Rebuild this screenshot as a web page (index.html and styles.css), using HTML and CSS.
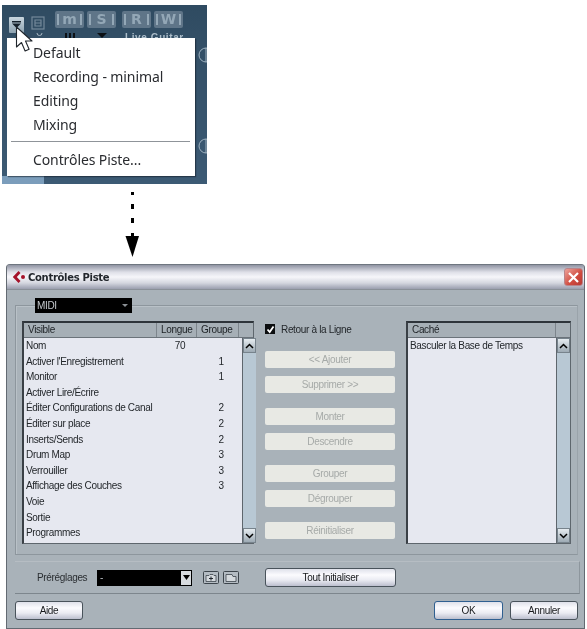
FILE: index.html
```html
<!DOCTYPE html>
<html lang="fr">
<head>
<meta charset="utf-8">
<title>Contrôles Piste</title>
<link rel="stylesheet" href="styles.css">
</head>
<body>
<section class="shot">
  <div class="toolbar">
    <span class="tb-drop"><svg width="15" height="15" viewBox="0 0 15 15"><rect x="3" y="4" width="9" height="1.500" fill="#15202a"/><path d="M3 6.500h9L7.500 11z" fill="#15202a"/></svg></span>
    <span class="tb-page"><svg width="16" height="16" viewBox="0 0 16 16" fill="none" stroke="#74899a" stroke-width="1.200"><rect x="2" y="2" width="12" height="12"/><path d="M5 5h6v6H5zM5 8h6"/></svg></span>
    <span class="tb-key tb-m"><b>m</b></span>
    <span class="tb-key"><b>S</b></span>
    <span class="tb-key tb-r"><b>R</b></span>
    <span class="tb-key tb-w"><b>W</b></span>
  </div>
  <div class="track-row">
    <svg class="tr-dot" width="7" height="5" viewBox="0 0 7 5"><path d="M1 0a2.500 2.500 0 0 0 5 0" fill="none" stroke="#a9b8c4"/></svg>
    <span class="tr-bars"></span>
    <svg class="tr-tri" width="10" height="5" viewBox="0 0 10 5"><path d="M0 0h10L5 5z" fill="#0c1014"/></svg>
    <span class="track-name">Live Guitar</span>
  </div>
  <div class="shot-foot"></div>
  <svg class="knob knob-a" width="10" height="18" viewBox="0 0 10 18" fill="none" stroke="#9fb2c0"><circle cx="9" cy="9" r="7"/><path d="M9 2v14"/></svg>
  <svg class="knob knob-b" width="10" height="18" viewBox="0 0 10 18" fill="none" stroke="#9fb2c0"><circle cx="9" cy="9" r="7"/><path d="M9 2v14"/></svg>
  <nav class="menu">
    <div class="menu-item">Default</div>
    <div class="menu-item">Recording - minimal</div>
    <div class="menu-item">Editing</div>
    <div class="menu-item">Mixing</div>
    <hr class="menu-sep">
    <div class="menu-item">Contrôles Piste...</div>
  </nav>
  <svg class="cursor" width="18" height="28" viewBox="0 0 18 28"><path d="M1.500 1v20l5-4.500 3.600 8.500 4-1.800-3.600-8.200h6.500z" fill="#fff" stroke="#20262c" stroke-width="1.100" stroke-linejoin="round"/></svg>
</section>

<svg class="flow-arrow" width="16" height="80" viewBox="0 0 16 80"><path d="M6 8h3v3H6zM6 20h3v5H6zM6 34h3v5H6zM6 49h3v7H6z" fill="#000"/><path d="M0.500 52h13.500L7.500 73z" fill="#000"/></svg>

<main class="dialog">
  <header class="titlebar">
    <svg class="logo" width="14" height="14" viewBox="0 0 14 14"><path d="M6.500 1 .8 7l5.700 6 2-2L4.800 7l3.700-4z" fill="#a5122a"/><circle cx="11" cy="7" r="2" fill="#a5122a"/></svg>
    <h1 class="title">Contrôles Piste</h1>
    <button class="close" aria-label="Fermer"><svg width="13" height="13" viewBox="0 0 13 13"><path d="M2 2l9 9M11 2l-9 9" stroke="#fff" stroke-width="2.200"/></svg></button>
  </header>
  <div class="dialog-body">
    <fieldset class="group">
      <legend class="midi"><span>MIDI</span><i class="mini-caret"></i></legend>
      <div class="columns">
        <div class="list list-visible">
          <div class="list-head">
            <span class="col-name">Visible</span><span class="col-long">Longue</span><span class="col-grp">Groupe</span><span class="col-sb"></span>
          </div>
          <div class="list-main">
            <div class="rows">
              <div class="row"><span>Nom</span><span class="c">70</span><span></span></div>
              <div class="row"><span>Activer l'Enregistrement</span><span></span><span class="c">1</span></div>
              <div class="row"><span>Monitor</span><span></span><span class="c">1</span></div>
              <div class="row"><span>Activer Lire/Écrire</span><span></span><span></span></div>
              <div class="row"><span>Éditer Configurations de Canal</span><span></span><span class="c">2</span></div>
              <div class="row"><span>Éditer sur place</span><span></span><span class="c">2</span></div>
              <div class="row"><span>Inserts/Sends</span><span></span><span class="c">2</span></div>
              <div class="row"><span>Drum Map</span><span></span><span class="c">3</span></div>
              <div class="row"><span>Verrouiller</span><span></span><span class="c">3</span></div>
              <div class="row"><span>Affichage des Couches</span><span></span><span class="c">3</span></div>
              <div class="row"><span>Voie</span><span></span><span></span></div>
              <div class="row"><span>Sortie</span><span></span><span></span></div>
              <div class="row"><span>Programmes</span><span></span><span></span></div>
            </div>
            <div class="scroll">
              <span class="sb-btn"><svg width="9" height="6" viewBox="0 0 9 6"><path d="M1 5l3.500-3.500L8 5" fill="none" stroke="#000" stroke-width="1.500"/></svg></span>
              <span class="sb-btn"><svg width="9" height="6" viewBox="0 0 9 6"><path d="M1 1l3.500 3.500L8 1" fill="none" stroke="#000" stroke-width="1.500"/></svg></span>
            </div>
          </div>
        </div>

        <div class="actions">
          <label class="wrap"><span class="check"><svg width="9" height="9" viewBox="0 0 9 9"><path d="M1.500 4.500 3.700 7 7.500 1.500" fill="none" stroke="#fff" stroke-width="1.800"/></svg></span>Retour à la Ligne</label>
          <div class="btn-group first">
            <button class="off">&lt;&lt; Ajouter</button>
            <button class="off">Supprimer &gt;&gt;</button>
          </div>
          <div class="btn-group">
            <button class="off">Monter</button>
            <button class="off">Descendre</button>
          </div>
          <div class="btn-group">
            <button class="off">Grouper</button>
            <button class="off">Dégrouper</button>
          </div>
          <div class="btn-group">
            <button class="off">Réinitialiser</button>
          </div>
        </div>

        <div class="list list-hidden">
          <div class="list-head">
            <span class="col-name">Caché</span><span class="col-sb"></span>
          </div>
          <div class="list-main">
            <div class="rows">
              <div class="row single"><span>Basculer la Base de Temps</span></div>
            </div>
            <div class="scroll">
              <span class="sb-btn"><svg width="9" height="6" viewBox="0 0 9 6"><path d="M1 5l3.500-3.500L8 5" fill="none" stroke="#000" stroke-width="1.500"/></svg></span>
              <span class="sb-btn"><svg width="9" height="6" viewBox="0 0 9 6"><path d="M1 1l3.500 3.500L8 1" fill="none" stroke="#000" stroke-width="1.500"/></svg></span>
            </div>
          </div>
        </div>
      </div>
    </fieldset>

    <div class="presets">
      <span class="presets-label">Préréglages</span>
      <div class="select"><span>-</span><i class="select-btn"><svg width="7" height="5" viewBox="0 0 7 5"><path d="M0 0h7L3.500 5z" fill="#000"/></svg></i></div>
      <svg class="preset-ico first-ico" width="16" height="13" viewBox="0 0 16 13" fill="none"><rect x=".5" y=".5" width="15" height="12" rx="1" fill="#b4bcc3" stroke="#3c444b"/><path d="M3 4.500h3l1-1h3l1 1h2v6H3z" fill="#d5dade" stroke="#3c444b" stroke-width=".8"/><path d="M6 7.500h4M8 5.500v4" stroke="#20262c"/></svg>
      <svg class="preset-ico" width="16" height="13" viewBox="0 0 16 13" fill="none"><rect x=".5" y=".5" width="15" height="12" rx="1" fill="#b4bcc3" stroke="#3c444b"/><path d="M3 3.500h6l1 2h3v5H3z" fill="#d5dade" stroke="#3c444b" stroke-width=".8"/></svg>
      <button class="btn reset-all">Tout Initialiser</button>
    </div>

    <footer class="footer">
      <button class="btn">Aide</button>
      <span class="spacer"></span>
      <button class="btn default">OK</button>
      <button class="btn">Annuler</button>
    </footer>
  </div>
</main>
</body>
</html>
```
FILE: styles.css
```css
* { box-sizing: border-box; }
html, body { margin: 0; padding: 0; background: #fff; }
body {
  width: 587px;
  height: 629px;
  overflow: hidden;
  font-family: "Liberation Sans", Arial, sans-serif;
  font-size: 10px;
  letter-spacing: -.33px;
  color: #1c2024;
}
button { font: inherit; letter-spacing: inherit; padding: 0; }

/* top cropped screenshot */
.shot {
  position: relative;
  width: 205px;
  height: 179px;
  margin: 5px 0 0 2px;
  background: linear-gradient(#2f4b61, #334f66 20%, #3c5a74);
  overflow: hidden;
  filter: blur(.35px);
}
.toolbar {
  display: flex;
  align-items: flex-start;
  height: 18px;
  margin-top: 6px;
  padding-left: 7px;
}
.tb-drop {
  display: flex;
  width: 15px;
  height: 16px;
  margin-top: 6px;
  background: linear-gradient(#c9d6de, #8ea3b1);
  border-radius: 1px;
}
.tb-page { display: flex; margin: 4px 0 0 6px; }
.tb-key {
  display: flex;
  align-items: center;
  justify-content: center;
  width: 29px;
  height: 17px;
  margin-left: 3px;
  background: #5f7588;
  border-radius: 2px;
  color: #93a7b6;
  font-family: "DejaVu Sans", sans-serif;
  font-size: 14px;
  letter-spacing: 0;
}
.tb-key b {
  display: flex;
  align-items: center;
  justify-content: center;
  width: 25px;
  height: 11px;
  border-left: 2px solid #93a7b6;
  border-right: 2px solid #93a7b6;
  font-weight: bold;
  line-height: 11px;
}
.tb-m { margin-left: 9px; }
.tb-r { margin-left: 6px; }
.tb-w { margin-left: 3px; }
.track-row {
  display: flex;
  align-items: flex-start;
  height: 10px;
  margin-top: 4px;
  padding-left: 34px;
}
.tr-dot { flex: none; }
.tr-bars {
  flex: none;
  width: 10px;
  height: 5px;
  margin-left: 22px;
  background: repeating-linear-gradient(90deg, #0c1014 0 2px, transparent 2px 4px);
}
.tr-tri { flex: none; margin-left: 22px; }
.track-name {
  margin-left: 18px;
  color: #aebfcb;
  font-size: 10px;
  font-weight: bold;
  letter-spacing: .6px;
  line-height: 10px;
  white-space: nowrap;
}
.shot-foot {
  position: absolute;
  left: 0;
  bottom: 0;
  width: 42px;
  height: 8px;
  background: #7b9dbb;
}
.knob { position: absolute; right: 0; }
.knob-a { top: 41px; }
.knob-b { top: 132px; }
.menu {
  position: absolute;
  left: 5px;
  top: 33px;
  width: 188px;
  height: 138px;
  padding-top: 3px;
  background: #fff;
  box-shadow: 1px 1px 1px rgba(20, 30, 40, .55);
}
.menu-item {
  height: 24px;
  padding-left: 26px;
  font-family: "Noto Sans", sans-serif;
  font-size: 14px;
  letter-spacing: -.1px;
  line-height: 24px;
  color: #2a2c30;
}
.menu-sep {
  height: 1px;
  margin: 4px 5px 6px 4px;
  border: 0;
  background: #8f9499;
}
.cursor { position: absolute; left: 13px; top: 21px; }

/* arrow */
.flow-arrow { display: block; margin-left: 125px; }

/* dialog */
.dialog {
  width: 579px;
  height: 365px;
  margin-left: 6px;
  background: #a9b2b9;
  border: 1px solid #636a72;
  border-top-color: #6f7680;
  border-radius: 4px 4px 0 0;
  filter: blur(.35px);
}
.titlebar {
  display: flex;
  align-items: center;
  height: 25px;
  padding: 0 1px 0 5px;
  background: linear-gradient(#8f93a2, #dfe0e8 30%, #f6f6fa 50%, #d4d6df 75%, #9a9eae);
  border-bottom: 1px solid #8a9098;
  border-radius: 3px 3px 0 0;
}
.logo { flex: none; }
.title {
  flex: 1;
  margin: 1px 0 0 2px;
  font-family: "DejaVu Sans", sans-serif;
  font-size: 10px;
  font-weight: bold;
  letter-spacing: -.3px;
  color: #22262c;
}
.close {
  display: flex;
  align-items: center;
  justify-content: center;
  width: 19px;
  height: 18px;
  border: 1px solid #b9848a;
  border-radius: 3px;
  background: linear-gradient(135deg, #eea39a, #cf4a3e 60%, #b93a35);
}
.dialog-body { padding: 8px 4px 0 8px; }

.group {
  width: 563px;
  height: 257px;
  margin: 0;
  padding: 8px 6px 0;
  border: 1px solid #8d969d;
  border-right-color: #9aa3aa;
  box-shadow: inset 1px 1px 0 #b9c1c7;
}
.midi {
  display: flex;
  align-items: center;
  justify-content: space-between;
  width: 97px;
  height: 15px;
  margin-left: 13px;
  padding: 0 4px 0 2px;
  background: #000;
  color: #c4c8cc;
  font-size: 10px;
}
.mini-caret {
  border-top: 3px solid #8a8f94;
  border-left: 3px solid transparent;
  border-right: 3px solid transparent;
}
.columns {
  display: grid;
  grid-template-columns: 232px 130px 165px;
  column-gap: 11px;
}

/* lists */
.list {
  display: flex;
  flex-direction: column;
  height: 223px;
  border: 1px solid #5e666d;
  border-top: 2px solid #2e343a;
  border-left: 2px solid #3a4046;
}
.list-head {
  display: flex;
  flex: none;
  height: 15px;
  background: #a6afb6;
  border-bottom: 1px solid #6b737a;
  line-height: 14px;
}
.list-head span { padding-left: 4px; border-right: 1px solid #7d858c; }
.col-name { flex: 1; }
.col-long { width: 40px; }
.col-grp { width: 42px; }
.list-head .col-sb { width: 14px; padding: 0; border-right: 0; }
.list-main { display: flex; flex: 1; min-height: 0; }
.rows { flex: 1; background: #e6e8f0; }
.row {
  display: grid;
  grid-template-columns: 134px 40px 42px;
  height: 15.6px;
  padding-left: 2px;
  line-height: 15.6px;
  color: #23272b;
  white-space: nowrap;
}
.row.single { grid-template-columns: 1fr; }
.row .c { text-align: center; }
.scroll {
  display: flex;
  flex-direction: column;
  justify-content: space-between;
  flex: none;
  width: 14px;
  background: #b8c8d4;
  border-left: 1px solid #5e666d;
}
.sb-btn {
  display: flex;
  align-items: center;
  justify-content: center;
  height: 15px;
  background: linear-gradient(#e6ecf0, #9daab4);
  border: 1px solid #77838c;
}

/* middle column */
.actions { display: flex; flex-direction: column; }
.wrap {
  display: flex;
  align-items: center;
  height: 16px;
  margin-bottom: 14px;
  color: #23272b;
}
.check {
  display: flex;
  align-items: center;
  justify-content: center;
  width: 10px;
  height: 10px;
  margin-right: 6px;
  background: #0c0e10;
}
.btn-group { display: flex; flex-direction: column; gap: 8px; margin-bottom: 15px; }
.off {
  width: 130px;
  height: 17px;
  background: #e8e9e4;
  border: 0;
  border-radius: 2px;
  color: #a6aaa8;
  font-size: 10px;
}

/* presets */
.presets {
  display: flex;
  align-items: center;
  width: 565px;
  height: 33px;
  margin-top: 6px;
  padding-left: 22px;
  border-top: 1px solid #b6bdc3;
  border-right: 1px solid #8d969d;
  border-bottom: 1px solid #7d868d;
}
.presets-label { width: 60px; color: #2a2e32; }
.select {
  display: flex;
  align-items: center;
  justify-content: space-between;
  width: 95px;
  height: 16px;
  padding-left: 3px;
  background: #000;
  color: #b8bcc0;
}
.select-btn {
  display: flex;
  align-items: center;
  justify-content: center;
  width: 10px;
  height: 14px;
  margin-right: 1px;
  background: #d8dce0;
}
.preset-ico { flex: none; margin-left: 4px; }
.first-ico { margin-left: 11px; }
.btn {
  height: 19px;
  background: linear-gradient(#dfe1ea, #fbfbfe 35%, #eaebf2 65%, #bcbfce);
  border: 1px solid #49535b;
  border-radius: 3px;
  color: #17191c;
  font-size: 10px;
}
.reset-all { width: 131px; margin-left: 26px; }

/* footer */
.footer { display: flex; gap: 7px; width: 563px; margin-top: 7px; }
.footer .btn { width: 68px; }
.footer .btn.default { border-color: #2f5f90; width: 69px; }
.spacer { flex: 1; }
```
